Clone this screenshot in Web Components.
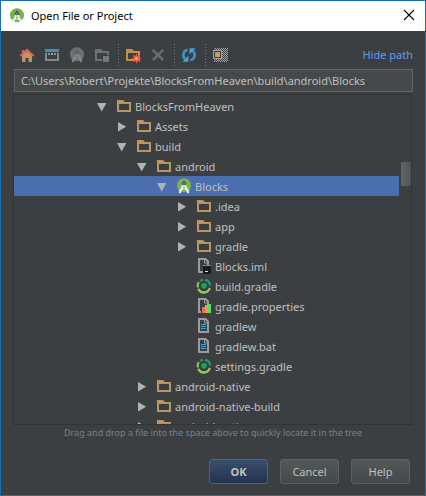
<!DOCTYPE html>
<html lang="en">
<head>
<meta charset="utf-8">
<title>Open File or Project</title>
<style>
  html { height: 100%; background: #3c3f41; }
  body { margin: 0; min-height: 100%; display: flex; font: 11px/16px "Noto Sans", "Open Sans", sans-serif; color: #c0c0c0; }
</style>
</head>
<body>
<open-dialog></open-dialog>
<script>
const STUDIO = (disc, body, legs) => `
  <circle cx="8" cy="7.2" r="7" fill="${disc}"/>
  <path d="M7.3 2.2h1.4v2H7.3z" fill="${body}"/>
  <circle cx="8" cy="5.8" r="2.3" fill="${body}"/>
  <path d="M7.2 7.2 3.6 15M8.8 7.2l3.6 7.8" stroke="${legs}" stroke-width="2" fill="none"/>
  <path d="M2.8 12.2q2.2-.2 3.4-1.2h3.6q1.2 1 3.4 1.2" stroke="${legs}" stroke-width="1" fill="none"/>
  <circle cx="8" cy="5.8" r=".8" fill="${disc}"/>`;
const PAGE = `<path d="M3 1h6.5L12 3.5V14H3z" fill="none" stroke="#9a9c9d" stroke-width="2"/><path d="M8.5 1v4H12" fill="none" stroke="#9a9c9d"/>`;
const FOLDER = c => `<path fill-rule="evenodd" fill="${c}" d="M1 2h6l2 2h6v10H1zM3 6v6h10V6z"/>`;
const STAR = `<path fill="#f4553f" d="m11.5 6 1 3 2.8-1.4-1.3 2.8 2.5 1-2.5 1 1.3 2.8-2.8-1.3-1 2.8-1-2.8-2.8 1.3L9 12.4l-2.5-1 2.5-1-1.3-2.8L10.5 9z"/><circle cx="11.5" cy="11.4" r="1.5" fill="#ffc06a"/>`;
const ICONS = {
  home: `<path d="M3 8 8 3.8 13 8v7H9.5v-4h-3v4H3z" fill="#bd9560"/><path d="M1.3 9 8 2.8 14.7 9" fill="none" stroke="#d3655f" stroke-width="2"/><path d="M3 3h2v3H3z" fill="#d3655f"/>`,
  desktop: `<path d="M1 2h14v3H1z" fill="#3e8fc0"/><path d="M2 6v7h12V6" fill="none" stroke="#85888a" stroke-width="2"/><path d="M4 6h2v2H4z" fill="#4a9bd0"/><path d="M7 6h2v2H7z" fill="#c99a4e"/><path d="M10 6h2v2h-2z" fill="#b8874f"/>`,
  project: STUDIO('#6e7072', '#5c5f61', '#858788'),
  module: `<path fill-rule="evenodd" fill="#6f7173" d="M1 2h6l2 2h6v4h-2V6H3v6h5v2H1z"/><path d="M9 9h6v6H9z" fill="#757779"/>`,
  create: FOLDER('#c1924f') + STAR,
  remove: `<path d="m2.8 2.8 10.4 10.4m0-10.4L2.8 13.2" stroke="#6c6e70" stroke-width="2.4"/>`,
  refresh: `<path d="M6.6 2.8C1.6 4.2 1.2 9.8 4.4 12.2" stroke="#3b92c4" stroke-width="2.6" fill="none"/><path d="M1.5 14.8h6V8.6z" fill="#4aa3d3"/><path d="M9.4 13.2c5-1.4 5.4-7 2.2-9.4" stroke="#3b92c4" stroke-width="2.6" fill="none"/><path d="M14.5 1.2h-6v6.2z" fill="#4aa3d3"/>`,
  hidden: `<defs><pattern id="p" width="2" height="2" patternUnits="userSpaceOnUse"><path d="M0 0h1v1H0zM1 1h1v1H1z" fill="#a2a4a5"/></pattern></defs><path d="M2 1h14v14H2z" fill="url(#p)"/><path d="M1.5 3.5h8v8h-8z" fill="#3c3f41" stroke="#a2a4a5"/><path d="M3 5h5v5H3z" fill="#d29a50"/>`,
  folder: FOLDER('#bd9560'),
  studio: STUDIO('#78b34c', '#4c5b60', '#f0f4f6'),
  iml: PAGE + `<path d="M7 7h8v9H7z" fill="#85888a"/><path d="M7 8h8v8H7z" fill="#17191a"/><path d="M9 13h3v1H9z" fill="#dddddd"/>`,
  gradle: `<path d="M2.8 4.2A6 6 0 0 0 2 9.5" stroke="#8fb960" stroke-width="2.2" fill="none"/><path d="M2.3 10.8A6.1 6.1 0 0 0 13.8 10" stroke="#a0c45c" stroke-width="2.3" fill="none"/><path d="M4.2 2.9A6 6 0 0 1 7 1.9M9.2 1.9A6.1 6.1 0 0 1 14.1 7.6" stroke="#1f9e68" stroke-width="2.2" fill="none"/><circle cx="8" cy="7.8" r="2.8" fill="#16a35f"/>`,
  props: PAGE + `<path d="M5 9h11v7H5z" fill="#3c3f41"/><path d="M6 9h3v6H6z" fill="#ee6a63"/><path d="M9 7h3v8H9z" fill="#eba04c"/><path d="M12 6h3v9h-3z" fill="#5ddc68"/>`,
  text: PAGE + `<path d="M5 6h5v1H5zM5 8h5v1H5zM5 10h5v1H5z" fill="#3fa0d8"/>`,
  open: `<path d="M4 5h9.4L8.7 13.4z" fill="#b0b2b3"/>`,
  closed: `<path d="M5 4v9.4l8.2-4.7z" fill="#b0b2b3"/>`,
  cross: `<path d="m3 3 10 10M13 3 3 13" stroke="#000" stroke-width="1.1"/>`
};

function define(name, render) {
  customElements.define(name, class extends HTMLElement {
    connectedCallback() {
      if (this.shadowRoot) return;
      const t = document.createElement('template');
      t.innerHTML = render(this);
      this.attachShadow({ mode: 'open' }).append(t.content.cloneNode(true));
    }
  });
}

define('ui-icon', el => `
  <style>:host { display: block; width: 16px; height: 16px; flex: none; } svg { display: block; overflow: visible; }</style>
  <svg width="16" height="16" viewBox="0 0 16 16" aria-hidden="true">${ICONS[el.getAttribute('name')]}</svg>`);

define('title-bar', () => `
  <style>
    :host { display: flex; align-items: center; gap: 6px; height: 30px; padding: 0 8px; background: #fff; color: #000; }
    h1 { margin: 0; flex: 1; font: inherit; }
    button { border: 0; padding: 0 0 2px; background: none; }
  </style>
  <ui-icon name="studio"></ui-icon>
  <h1><slot></slot></h1>
  <button aria-label="Close"><ui-icon name="cross"></ui-icon></button>`);

define('tool-button', el => `
  <style>
    :host { display: block; }
    button { display: block; border: 0; padding: 4px 5px 4px 4px; background: none; }
  </style>
  <button aria-label="${el.getAttribute('label')}"><ui-icon name="${el.getAttribute('icon')}"></ui-icon></button>`);

define('tool-bar', () => `
  <style>
    :host { display: flex; align-items: center; height: 24px; padding: 12px 12px 2px 14px; }
    hr { width: 1px; height: 23px; margin: 0 2px 0 3px; border: 0; background: repeating-linear-gradient(#74777a 0 1px, transparent 1px 3px); }
    a { margin-left: auto; color: #589df6; text-decoration: none; }
  </style>
  <tool-button icon="home" label="Home directory"></tool-button>
  <tool-button icon="desktop" label="Desktop directory"></tool-button>
  <tool-button icon="project" label="Project directory"></tool-button>
  <tool-button icon="module" label="Module directory"></tool-button>
  <hr>
  <tool-button icon="create" label="New folder"></tool-button>
  <tool-button icon="remove" label="Delete"></tool-button>
  <hr>
  <tool-button icon="refresh" label="Refresh"></tool-button>
  <hr>
  <tool-button icon="hidden" label="Show hidden files"></tool-button>
  <a href="#path">Hide path</a>`);

define('path-field', el => `
  <style>
    :host { display: block; padding: 0 12px 0 13px; }
    input { display: block; box-sizing: border-box; width: 100%; height: 23px; margin: 0; padding: 0 6px; border: 1px solid #646464; border-radius: 0; background: #45494a; color: inherit; font: inherit; outline: 0; }
  </style>
  <input aria-label="Path" value="${el.getAttribute('value')}">`);

define('tree-row', el => {
  const state = el.getAttribute('state');
  return `
  <style>
    :host { display: flex; align-items: center; height: 20px; padding-left: calc(79px + 20px * var(--depth)); white-space: nowrap; }
    :host([selected]) { background: #4b6eaf; }
    .arrow { width: 16px; height: 16px; flex: none; margin-right: 7px; padding: 0; border: 0; background: none; }
    .name { margin-left: 3px; padding-top: 2px; }
  </style>
  ${state ? `<button class="arrow" aria-label="${state === 'open' ? 'Collapse' : 'Expand'}"><ui-icon name="${state}"></ui-icon></button>` : '<span class="arrow"></span>'}
  <ui-icon name="${el.getAttribute('icon')}"></ui-icon>
  <span class="name"><slot></slot></span>`;
});

const FILES = [
  [0, 'open', 'folder', 'BlocksFromHeaven'],
  [1, 'closed', 'folder', 'Assets'],
  [1, 'open', 'folder', 'build'],
  [2, 'open', 'folder', 'android'],
  [3, 'open', 'studio', 'Blocks', true],
  [4, 'closed', 'folder', '.idea'],
  [4, 'closed', 'folder', 'app'],
  [4, 'closed', 'folder', 'gradle'],
  [4, '', 'iml', 'Blocks.iml'],
  [4, '', 'gradle', 'build.gradle'],
  [4, '', 'props', 'gradle.properties'],
  [4, '', 'text', 'gradlew'],
  [4, '', 'text', 'gradlew.bat'],
  [4, '', 'gradle', 'settings.gradle'],
  [2, 'closed', 'folder', 'android-native'],
  [2, 'closed', 'folder', 'android-native-build'],
  [2, 'closed', 'folder', 'android-native']
];

define('file-tree', () => `
  <style>
    :host { display: flex; flex: 1 1 0; min-height: 0; margin: 2px 13px 0 12px; border: 1px solid #313335; overflow: hidden; }
    .rows { flex: 1; min-width: 0; padding-top: 1px; }
    .track { width: 10px; flex: none; padding: 67px 0 0 2px; }
    .thumb { height: 24px; border-radius: 1px; background: linear-gradient(90deg, #656667, #515253); }
  </style>
  <div class="rows" role="tree">
    ${FILES.map(([d, s, i, n, sel]) => `<tree-row role="treeitem" aria-level="${d + 1}" style="--depth:${d}" state="${s}" icon="${i}"${sel ? ' selected aria-selected="true"' : ''}>${n}</tree-row>`).join('')}
  </div>
  <div class="track"><div class="thumb"></div></div>`);

define('push-button', () => `
  <style>
    :host { display: block; }
    button { display: block; box-sizing: border-box; min-width: 59px; height: 25px; padding: 0 8px; border: 1px solid #5e6162; border-radius: 3px; background: linear-gradient(#535859, #434849); color: inherit; font: inherit; }
    :host([primary]) button { border-color: #5a6069; background: linear-gradient(#384f6e, #243350); font-weight: bold; }
  </style>
  <button><slot></slot></button>`);

define('open-dialog', () => `
  <style>
    :host { display: flex; flex-direction: column; flex: 1; min-width: 0; box-sizing: border-box; height: 100vh; border: 1px solid #1a6fb3; background: #3c3f41; }
    .hint { margin: 0; font-size: 9px; text-align: center; color: #7c7f81; }
    footer { display: flex; justify-content: flex-end; gap: 12px; padding: 18px 15px 11px; }
  </style>
  <title-bar>Open File or Project</title-bar>
  <tool-bar></tool-bar>
  <path-field value="C:\\Users\\Robert\\Projekte\\BlocksFromHeaven\\build\\android\\Blocks"></path-field>
  <file-tree></file-tree>
  <p class="hint">Drag and drop a file into the space above to quickly locate it in the tree</p>
  <footer>
    <push-button primary>OK</push-button>
    <push-button>Cancel</push-button>
    <push-button>Help</push-button>
  </footer>`);
</script>
</body>
</html>
